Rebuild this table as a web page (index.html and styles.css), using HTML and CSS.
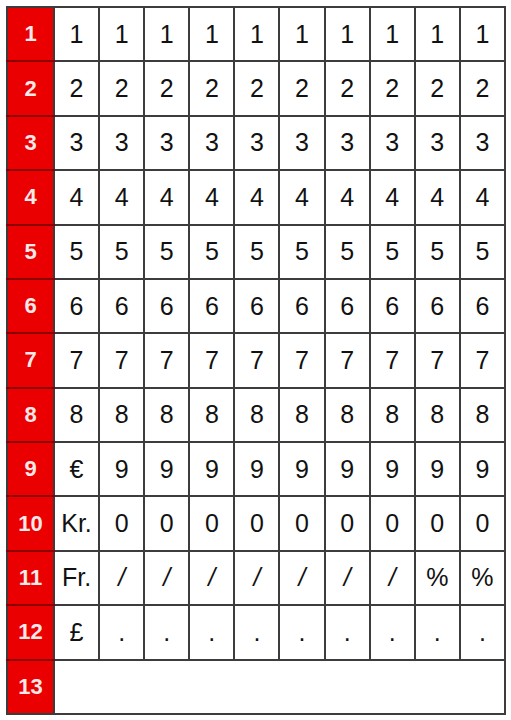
FILE: index.html
```html
<!DOCTYPE html>
<html>
<head>
<meta charset="utf-8">
<link rel="stylesheet" href="styles.css">
</head>
<body>
<table class="grid">
<tr><th>1</th><td>1</td><td>1</td><td>1</td><td>1</td><td>1</td><td>1</td><td>1</td><td>1</td><td>1</td><td>1</td></tr>
<tr><th>2</th><td>2</td><td>2</td><td>2</td><td>2</td><td>2</td><td>2</td><td>2</td><td>2</td><td>2</td><td>2</td></tr>
<tr><th>3</th><td>3</td><td>3</td><td>3</td><td>3</td><td>3</td><td>3</td><td>3</td><td>3</td><td>3</td><td>3</td></tr>
<tr><th>4</th><td>4</td><td>4</td><td>4</td><td>4</td><td>4</td><td>4</td><td>4</td><td>4</td><td>4</td><td>4</td></tr>
<tr><th>5</th><td>5</td><td>5</td><td>5</td><td>5</td><td>5</td><td>5</td><td>5</td><td>5</td><td>5</td><td>5</td></tr>
<tr><th>6</th><td>6</td><td>6</td><td>6</td><td>6</td><td>6</td><td>6</td><td>6</td><td>6</td><td>6</td><td>6</td></tr>
<tr><th>7</th><td>7</td><td>7</td><td>7</td><td>7</td><td>7</td><td>7</td><td>7</td><td>7</td><td>7</td><td>7</td></tr>
<tr><th>8</th><td>8</td><td>8</td><td>8</td><td>8</td><td>8</td><td>8</td><td>8</td><td>8</td><td>8</td><td>8</td></tr>
<tr><th>9</th><td>€</td><td>9</td><td>9</td><td>9</td><td>9</td><td>9</td><td>9</td><td>9</td><td>9</td><td>9</td></tr>
<tr><th>10</th><td>Kr.</td><td>0</td><td>0</td><td>0</td><td>0</td><td>0</td><td>0</td><td>0</td><td>0</td><td>0</td></tr>
<tr><th>11</th><td>Fr.</td><td class="sl">/</td><td class="sl">/</td><td class="sl">/</td><td class="sl">/</td><td class="sl">/</td><td class="sl">/</td><td class="sl">/</td><td>%</td><td>%</td></tr>
<tr><th>12</th><td>£</td><td>.</td><td>.</td><td>.</td><td>.</td><td>.</td><td>.</td><td>.</td><td>.</td><td>.</td></tr>
<tr><th>13</th><td colspan="10"></td></tr>
</table>
</body>
</html>
```
FILE: styles.css
```css
html, body {
  margin: 0;
  padding: 0;
  background: #ffffff;
}
.grid {
  margin: 6px 0 0 6px;
  width: 500px;
  height: 709px;
  border-collapse: collapse;
  table-layout: fixed;
  font-family: "Liberation Sans", Arial, sans-serif;
}
.grid th, .grid td {
  border: 2px solid #3c3c3c;
  text-align: center;
  vertical-align: middle;
  padding: 0;
  height: 48px;
}
.grid td {
  font-size: 25px;
  color: #111111;
}
.grid th {
  width: 45px;
  background: #ea0000;
  color: #fbe9e9;
  font-size: 22px;
  font-weight: bold;
  border-top-color: #8a0000;
  border-bottom-color: #8a0000;
}
.grid tr:first-child th { border-top-color: #3c3c3c; }
.grid tr:last-child th { border-bottom-color: #3c3c3c; }
.grid td.sl { font-style: italic; }
```
